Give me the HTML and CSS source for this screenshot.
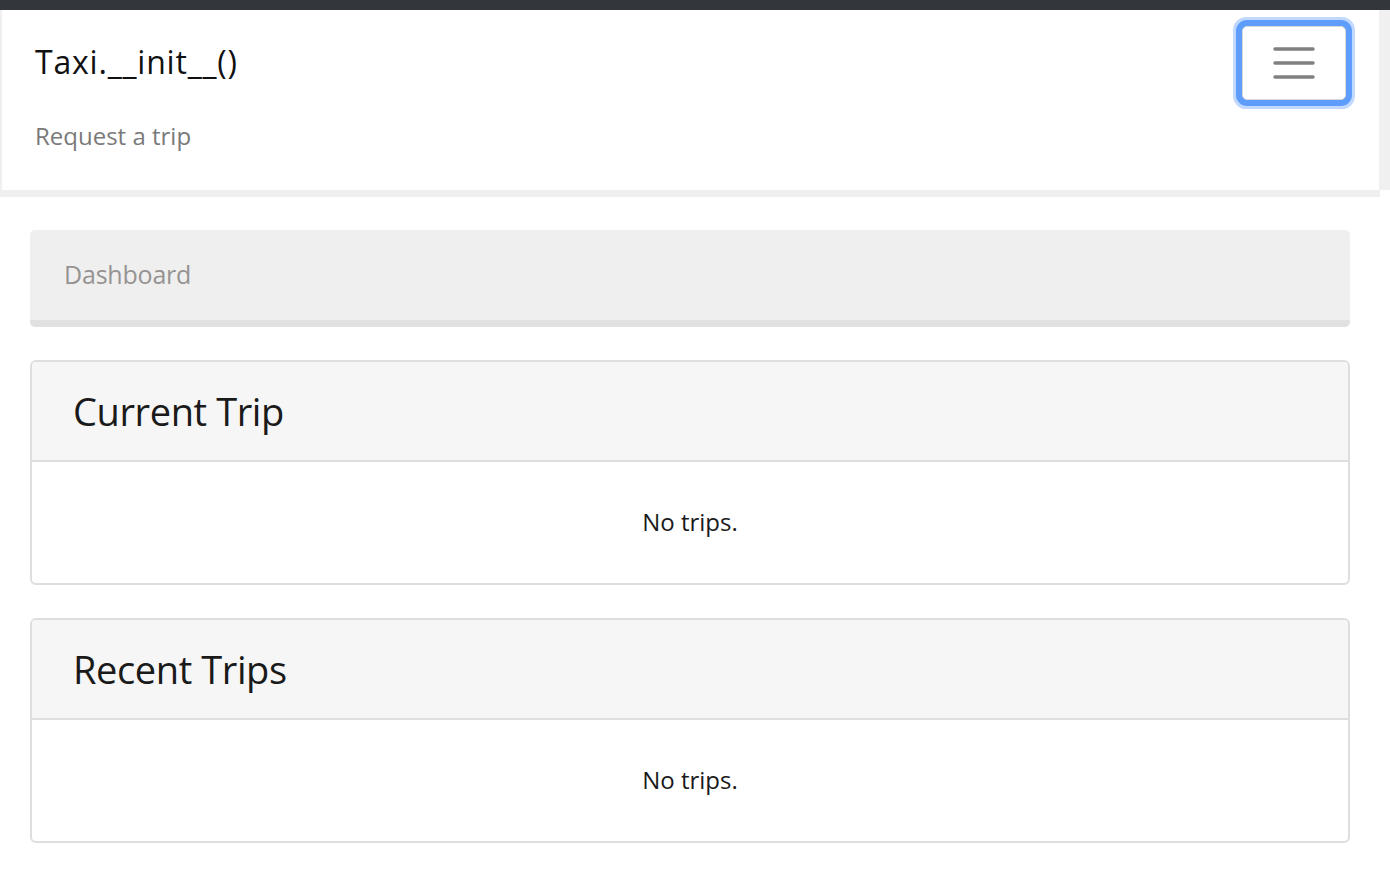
FILE: index.html
```html
<!DOCTYPE html>
<html lang="en">
<head>
<meta charset="utf-8">
<title>Taxi</title>
<link rel="stylesheet" href="styles.css">
</head>
<body>
<div class="topbar"></div>
<header class="header">
  <div class="nav-frame">
    <nav class="navbar">
      <div class="nav-left">
        <a class="brand" href="#">Taxi.__init__()</a>
        <a class="nav-link" href="#">Request a trip</a>
      </div>
      <button class="toggler" type="button" aria-label="Toggle navigation">
        <svg width="42" height="32" viewBox="0 0 42 32">
          <g stroke="#808080" stroke-width="3.5" stroke-linecap="round">
            <line x1="2" y1="2" x2="40" y2="2"/>
            <line x1="2" y1="16" x2="40" y2="16"/>
            <line x1="2" y1="30" x2="40" y2="30"/>
          </g>
        </svg>
      </button>
    </nav>
  </div>
  <div class="nav-edge"></div>
</header>
<main class="main">
  <div class="breadcrumb">Dashboard</div>
  <section class="card">
    <div class="card-header">Current Trip</div>
    <div class="card-body">No trips.</div>
  </section>
  <section class="card">
    <div class="card-header">Recent Trips</div>
    <div class="card-body">No trips.</div>
  </section>
</main>
</body>
</html>
```
FILE: styles.css
```css
* { box-sizing: border-box; }
html, body { margin: 0; padding: 0; }
body {
  font-family: "Open Sans", "Noto Sans", sans-serif;
  color: #212529;
  background: #fff;
}
.topbar { height: 10px; background: #33373b; }
.header { display: flex; align-items: flex-start; }
.nav-frame {
  width: 1380px;
  background: #efefef;
  padding: 0 1px 7px 2px;
}
.nav-edge { flex: 1; height: 180px; background: #f0f0f0; }
.navbar {
  height: 180px;
  background: #fff;
  display: flex;
  justify-content: space-between;
  align-items: flex-start;
  padding: 16px 33px 0 33px;
}
.nav-left { display: flex; flex-direction: column; }
.brand {
  font-size: 32px;
  line-height: 40px;
  letter-spacing: 0.8px;
  margin-top: 16px;
  color: #111;
  text-decoration: none;
}
.nav-link {
  font-size: 24px;
  line-height: 32px;
  margin-top: 38px;
  color: #7a7a7a;
  text-decoration: none;
}
.toggler {
  width: 104px;
  height: 74px;
  border: 1px solid #d9d9d9;
  border-radius: 5px;
  background: #fff;
  display: flex;
  align-items: center;
  justify-content: center;
  padding: 0;
  box-shadow: 0 0 0 6px #5f9dfd, 0 0 0 9px rgba(120, 170, 255, 0.45);
}
.main { padding: 33px 40px 0 30px; }
.breadcrumb {
  height: 97px;
  background: #efefef;
  border-bottom: 7px solid #e1e1e1;
  border-radius: 5px;
  padding-left: 34px;
  font-size: 25px;
  letter-spacing: -0.2px;
  line-height: 89px;
  color: #969393;
}
.card {
  margin-top: 33px;
  border: 2px solid #dedede;
  border-radius: 6px;
  overflow: hidden;
}
.card-header {
  height: 100px;
  background: #f6f6f6;
  border-bottom: 2px solid #dedede;
  padding-left: 41px;
  font-size: 38px;
  letter-spacing: -0.4px;
  line-height: 98px;
  color: #1a1a1a;
}
.card-body {
  height: 121px;
  text-align: center;
  font-size: 24px;
  line-height: 119px;
  color: #1a1a1a;
}
```
